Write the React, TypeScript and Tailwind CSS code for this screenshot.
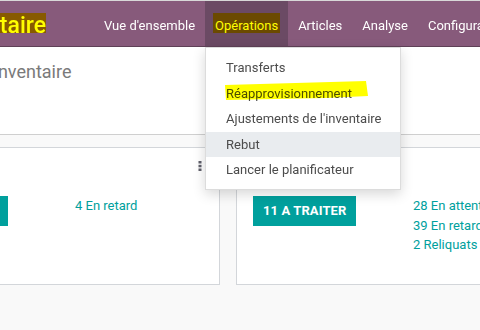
import React from "react";

const navItems = ["Vue d'ensemble", "Opérations", "Articles", "Analyse", "Configuration"];

const menuItems = [
  "Transferts",
  "Réapprovisionnement",
  "Ajustements de l'inventaire",
  "Rebut",
  "Lancer le planificateur",
];

function Kebab() {
  return (
    <svg width="4" height="10" viewBox="0 0 4 10" className="absolute right-[17px] top-[13px]">
      <rect x="0.5" y="0" width="3" height="2.5" fill="#5f5f6a" />
      <rect x="0.5" y="3.8" width="3" height="2.5" fill="#5f5f6a" />
      <rect x="0.5" y="7.5" width="3" height="2.5" fill="#5f5f6a" />
    </svg>
  );
}

function Card({
  count,
  links,
  kebab,
  btnClass = "",
}: {
  count: number;
  links: string[];
  kebab?: boolean;
  btnClass?: string;
}) {
  return (
    <div className="relative w-[322px] h-[138px] shrink-0 bg-white border border-[#d3d6da] pl-4 pt-[48px] flex">
      {kebab && <Kebab />}
      <div className="w-[160px] shrink-0">
        <button
          className={`h-[30px] px-[10px] bg-[#00a09d] text-white text-[13px] font-bold uppercase whitespace-nowrap tracking-[0.1px] ${btnClass}`}
        >
          {count} A TRAITER
        </button>
      </div>
      <div className="flex flex-col text-[13px] leading-[19.5px] text-[#00a09d] whitespace-nowrap">
        {links.map((l) => (
          <span key={l}>{l}</span>
        ))}
      </div>
    </div>
  );
}

export default function App() {
  return (
    <div
      className="relative w-[480px] h-[330px] overflow-hidden bg-[#f9f9f9]"
      style={{ fontFamily: "Roboto, 'Liberation Sans', sans-serif" }}
    >
      {/* top bar */}
      <div className="h-[47px] bg-[#875a7b] border-t border-t-[#d8d8d8] border-b border-b-[#5f4157] flex text-white text-[13px] relative z-20">
        <div className="relative w-[94px] shrink-0 flex items-center justify-end pr-[48px]">
          <span className="text-[23px] font-medium whitespace-nowrap leading-none mt-[3px]">Inventaire</span>
          <div className="absolute left-0 top-[12px] w-[46px] h-[20px] bg-[#ffff00] mix-blend-multiply pointer-events-none" />
        </div>
        {navItems.map((item) => {
          const active = item === "Opérations";
          return (
            <div
              key={item}
              className={`relative px-[10px] flex items-center whitespace-nowrap ${active ? "bg-[#6b4a64]" : ""}`}
            >
              <span className="mt-[4px]">{item}</span>
              {active && (
                <>
                  <div className="absolute left-[8px] top-[12px] w-[67px] h-[20px] bg-[#ffff00] mix-blend-multiply pointer-events-none" />
                  <div className="absolute left-0 top-full mt-[1px] w-[196px] bg-white border border-[#dcdcdc] shadow-[0_4px_12px_rgba(0,0,0,0.16)] pt-[7px] pb-[6px] text-[#4c4c4c]">
                    {menuItems.map((m) => (
                      <div
                        key={m}
                        className={`relative h-[25.5px] pl-[20px] flex items-center ${m === "Rebut" ? "bg-[#e9ecef]" : ""}`}
                      >
                        {m}
                        {m === "Réapprovisionnement" && (
                          <svg
                            width="170"
                            height="22"
                            className="absolute left-0 top-0 mix-blend-multiply pointer-events-none"
                          >
                            <polygon points="19,4 160,0 162,15 120,17 20,19" fill="#ffff00" />
                          </svg>
                        )}
                      </div>
                    ))}
                  </div>
                </>
              )}
            </div>
          );
        })}
      </div>

      {/* control panel */}
      <div className="h-[88px] bg-white border-b border-[#cfcfcf] pt-[12px]">
        <div className="ml-[-7px] text-[18px] text-[#7a7a7a] leading-[26px]">Inventaire</div>
      </div>

      {/* cards */}
      <div className="flex gap-4 ml-[-102px] mt-[12px]">
        <Card count={5} links={["4 En retard"]} kebab btnClass="-ml-[3px]" />
        <Card count={11} links={["28 En attente", "39 En retard", "2 Reliquats"]} />
      </div>
    </div>
  );
}
